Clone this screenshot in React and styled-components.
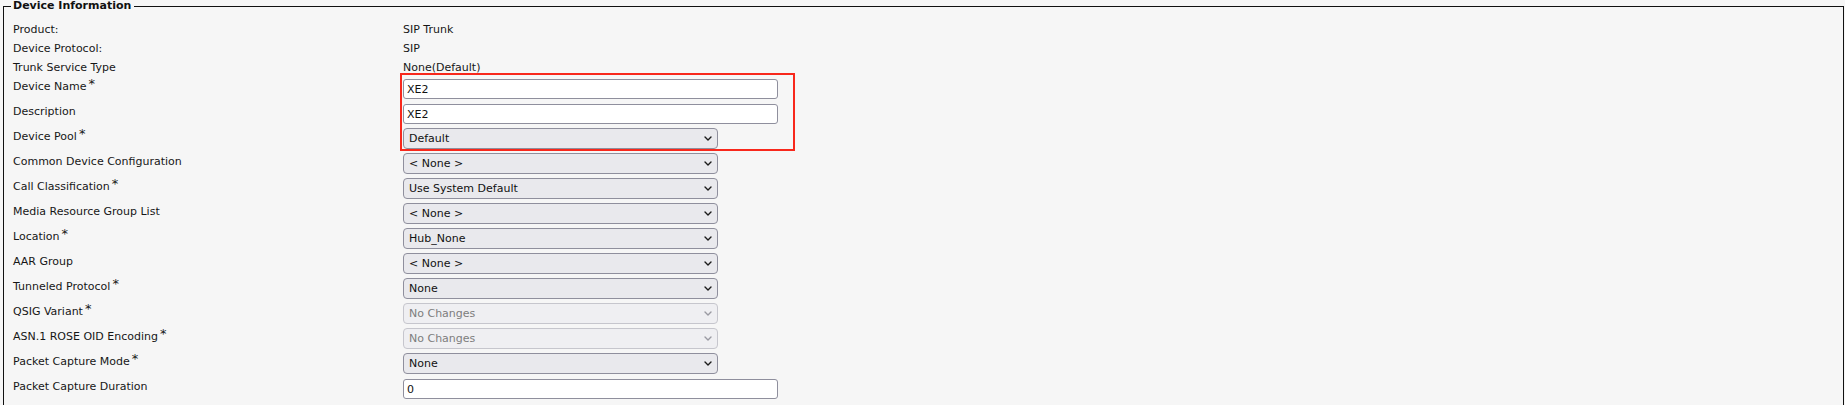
import React from "react";
import styled, { createGlobalStyle } from "styled-components";

const GlobalStyle = createGlobalStyle`
    html, body {
        margin: 0;
        padding: 0;
        overflow: hidden;
        background: #f6f6f6;
    }
    body {
        font-family: "DejaVu Sans", Verdana, sans-serif;
        font-size: 11px;
        color: #161616;
    }
`;

const rows = [
    { label: "Product:", kind: "text", value: "SIP Trunk" },
    { label: "Device Protocol:", kind: "text", value: "SIP" },
    { label: "Trunk Service Type", kind: "text", value: "None(Default)" },
    { label: "Device Name", req: true, kind: "input", value: "XE2" },
    { label: "Description", kind: "input", value: "XE2" },
    { label: "Device Pool", req: true, kind: "select", value: "Default" },
    { label: "Common Device Configuration", kind: "select", value: "< None >" },
    { label: "Call Classification", req: true, kind: "select", value: "Use System Default" },
    { label: "Media Resource Group List", kind: "select", value: "< None >" },
    { label: "Location", req: true, kind: "select", value: "Hub_None" },
    { label: "AAR Group", kind: "select", value: "< None >" },
    { label: "Tunneled Protocol", req: true, kind: "select", value: "None" },
    { label: "QSIG Variant", req: true, kind: "select", value: "No Changes", disabled: true },
    { label: "ASN.1 ROSE OID Encoding", req: true, kind: "select", value: "No Changes", disabled: true },
    { label: "Packet Capture Mode", req: true, kind: "select", value: "None" },
    { label: "Packet Capture Duration", kind: "input", value: "0" },
];

const Chevron = ({ disabled }) => (
    <svg width="8" height="5" viewBox="0 0 8 5">
        <path
            d="M1 1 L4 4 L7 1"
            fill="none"
            stroke={disabled ? "#9a9aa2" : "#1b1b1b"}
            strokeWidth="1.4"
            strokeLinecap="round"
            strokeLinejoin="round"
        />
    </svg>
);

const Control = ({ row }) => {
    if (row.kind === "text") return <StValue>{row.value}</StValue>;
    if (row.kind === "input") return <StInput defaultValue={row.value} />;
    return (
        <StSelect $disabled={row.disabled}>
            <span>{row.value}</span>
            <Chevron disabled={row.disabled} />
        </StSelect>
    );
};

const App = () => {
    return (
        <>
            <GlobalStyle />
            <StFieldset>
                <StLegend>Device Information</StLegend>
                <StHighlight />
                {rows.map((row) => (
                    <StRow key={row.label} $kind={row.kind}>
                        <StLabel $kind={row.kind}>
                            {row.label}
                            {row.req && <StReq>*</StReq>}
                        </StLabel>
                        <Control row={row} />
                    </StRow>
                ))}
            </StFieldset>
        </>
    );
};

export default App;

const StFieldset = styled.fieldset`
    position: relative;
    margin: 0 1px 0 3px;
    padding: 8px 9px 30px 9px;
    border: 1px solid #111;
    border-bottom: none;
    min-height: 420px;
`;

const StLegend = styled.legend`
    margin-left: -2px;
    padding: 0 3px 0 2px;
    font-weight: bold;
    font-size: 11px;
    line-height: 12px;
    color: #111;
`;

const StHighlight = styled.div`
    position: absolute;
    left: 396px;
    top: 61px;
    width: 391px;
    height: 74px;
    border: 2px solid #f8281c;
    pointer-events: none;
`;

const StRow = styled.div`
    display: grid;
    grid-template-columns: 390px 1fr;
    align-items: start;
    height: ${(p) => (p.$kind === "text" ? "19px" : "25px")};
`;

const StLabel = styled.div`
    line-height: ${(p) => (p.$kind === "text" ? "19px" : "14px")};
    padding-top: ${(p) => (p.$kind === "text" ? "0" : "3px")};
    white-space: nowrap;
`;

const StReq = styled.span`
    font-size: 13px;
    margin-left: 2px;
    vertical-align: 2px;
    line-height: 0;
`;

const StValue = styled.div`
    line-height: 19px;
`;

const StInput = styled.input`
    box-sizing: border-box;
    width: 375px;
    height: 20px;
    margin: 2px 0 0;
    padding: 0 4px 0 3px;
    border: 1px solid #8f8f9d;
    border-radius: 3px;
    background: #fff;
    font-family: "DejaVu Sans", Verdana, sans-serif;
    font-size: 11px;
    color: #111;
    outline: none;
`;

const StSelect = styled.div`
    box-sizing: border-box;
    display: flex;
    align-items: center;
    justify-content: space-between;
    width: 315px;
    height: 21px;
    margin-top: 1px;
    padding: 0 5px 0 5px;
    border: 1px solid ${(p) => (p.$disabled ? "#c6c6cd" : "#8f8f9d")};
    border-radius: 4px;
    background: ${(p) => (p.$disabled ? "#efeff2" : "#e9e9ed")};
    color: ${(p) => (p.$disabled ? "#7d7d7d" : "#111")};
    white-space: nowrap;
`;
